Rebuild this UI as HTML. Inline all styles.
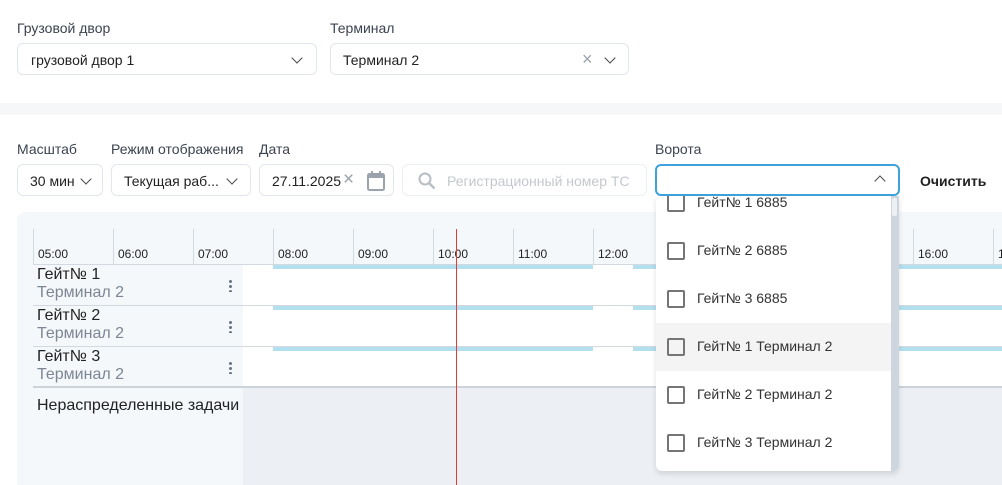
<!DOCTYPE html><html style="width:1002px;height:485px;overflow:hidden"><head><meta charset="utf-8"><style>
*{box-sizing:border-box;margin:0;padding:0}
body{width:1002px;height:485px;overflow:hidden;background:#fff;font-family:"Liberation Sans",Roboto,sans-serif;position:relative;color:#222}
.a{position:absolute}
.lbl{font-size:14px;color:#3c4350}
.box{position:absolute;border:1px solid #e2e7ee;border-radius:6px;background:#fff;font-size:14px;color:#222}
.chev{position:absolute;width:8px;height:8px;border-right:1.5px solid #444;border-bottom:1.5px solid #444;transform:rotate(45deg)}
.hr{position:absolute;top:229px;height:35px;border-left:1px solid #d3d9e0;font-size:12px;padding-left:4px;padding-top:18px;color:#222}
.bar{position:absolute;height:4px;background:#b3e0ee}
.it{position:absolute;left:656px;width:235px;height:48px;font-size:14px;color:#333}
.it i{position:absolute;left:11px;top:15px;width:18px;height:18px;border:2px solid #757575;border-radius:2px}
.it span{position:absolute;left:41px;top:15px}
.g{font-size:16px}
</style></head><body>
<div class="a" style="left:0;top:0;width:1002px;height:103px;background:#fff;box-shadow:0 1px 3px rgba(0,0,0,.12)"></div>
<div class="a" style="left:0;top:103px;width:1002px;height:12px;background:#f6f7f9"></div>
<div class="a lbl" style="left:17px;top:20px">Грузовой двор</div>
<div class="box" style="left:17px;top:43px;width:300px;height:32px"><span class="a" style="left:13px;top:8px">грузовой двор 1</span><div class="chev" style="left:275px;top:10px"></div></div>
<div class="a lbl" style="left:330px;top:20px">Терминал</div>
<div class="box" style="left:330px;top:43px;width:299px;height:32px"><span class="a" style="left:12px;top:8px">Терминал 2</span><span class="a" style="left:251px;top:5px;color:#9aa3ae;font-size:18px">×</span><div class="chev" style="left:275px;top:10px"></div></div>

<div class="a lbl" style="left:17px;top:141px">Масштаб</div>
<div class="box" style="left:17px;top:164px;width:86px;height:32px"><span class="a" style="left:12px;top:8px">30 мин</span><div class="chev" style="left:64px;top:10px"></div></div>
<div class="a lbl" style="left:111px;top:141px">Режим отображения</div>
<div class="box" style="left:111px;top:164px;width:140px;height:32px"><span class="a" style="left:12px;top:8px">Текущая раб...</span><div class="chev" style="left:116px;top:10px"></div></div>
<div class="a lbl" style="left:259px;top:141px">Дата</div>
<div class="box" style="left:259px;top:164px;width:135px;height:32px"><span class="a" style="left:12px;top:8px">27.11.2025</span><span class="a" style="left:83px;top:4px;color:#9aa3ae;font-size:19px">×</span>
<svg class="a" style="left:106px;top:5px" width="20" height="22" viewBox="0 0 20 22"><rect x="2" y="4" width="16" height="16" rx="1.5" fill="none" stroke="#9aa3ae" stroke-width="2"/><rect x="2" y="4" width="16" height="4" fill="#9aa3ae"/><rect x="5" y="1" width="2" height="4" fill="#9aa3ae"/><rect x="13" y="1" width="2" height="4" fill="#9aa3ae"/></svg></div>
<div class="box" style="left:402px;top:164px;width:245px;height:32px;border-color:#eceff3"><svg class="a" style="left:15px;top:7px" width="18" height="18" viewBox="0 0 18 18"><circle cx="7" cy="7" r="5.5" fill="none" stroke="#b8bec6" stroke-width="2"/><path d="M11 11l5.5 5.5" stroke="#b8bec6" stroke-width="2.4"/></svg><span class="a" style="left:44px;top:8px;color:#c3c8ce">Регистрационный номер ТС</span></div>
<div class="a lbl" style="left:655px;top:141px">Ворота</div>
<div class="box" style="left:655px;top:164px;width:245px;height:32px;border:2px solid #3ea2dc"><div class="chev" style="left:219px;top:11px;transform:rotate(-135deg)"></div></div>
<div class="a" style="left:920px;top:173px;font-size:14px;font-weight:bold;color:#222">Очистить</div>

<div class="a" style="left:17px;top:212px;width:1000px;height:273px;background:#f5f8fb;border-radius:8px 8px 0 0"></div>
<div class="a" style="left:243px;top:264px;width:760px;height:124px;background:#fff"></div>
<div class="a" style="left:243px;top:388px;width:760px;height:97px;background:#ecf0f4"></div>
<div class="a" style="left:33px;top:264px;width:970px;height:1px;background:#d3d9e0"></div>
<div class="a" style="left:33px;top:305px;width:970px;height:1px;background:#d3d9e0"></div>
<div class="a" style="left:33px;top:346px;width:970px;height:1px;background:#d3d9e0"></div>
<div class="a" style="left:33px;top:386px;width:970px;height:2px;background:#cdd3da"></div>
<div class="hr" style="left:33px">05:00</div><div class="hr" style="left:113px">06:00</div><div class="hr" style="left:193px">07:00</div><div class="hr" style="left:273px">08:00</div><div class="hr" style="left:353px">09:00</div><div class="hr" style="left:433px">10:00</div><div class="hr" style="left:513px">11:00</div><div class="hr" style="left:593px">12:00</div><div class="hr" style="left:913px">16:00</div><div class="hr" style="left:993px">17:00</div>
<div class="bar" style="left:273px;top:265px;width:320px"></div><div class="bar" style="left:633px;top:265px;width:370px"></div>
<div class="bar" style="left:273px;top:306px;width:320px"></div><div class="bar" style="left:633px;top:306px;width:370px"></div>
<div class="bar" style="left:273px;top:347px;width:320px"></div><div class="bar" style="left:633px;top:347px;width:370px"></div>
<div class="a g" style="left:37px;top:266px">Гейт№ 1</div><div class="a g" style="left:37px;top:284px;color:#7d8694">Терминал 2</div>
<div class="a g" style="left:37px;top:307px">Гейт№ 2</div><div class="a g" style="left:37px;top:325px;color:#7d8694">Терминал 2</div>
<div class="a g" style="left:37px;top:348px">Гейт№ 3</div><div class="a g" style="left:37px;top:366px;color:#7d8694">Терминал 2</div>
<div class="a" style="left:229px;top:279px;width:3px;height:13px;background:radial-gradient(circle,#6b7685 1.4px,transparent 1.6px) 0 0/3px 5px"></div>
<div class="a" style="left:229px;top:320px;width:3px;height:13px;background:radial-gradient(circle,#6b7685 1.4px,transparent 1.6px) 0 0/3px 5px"></div>
<div class="a" style="left:229px;top:361px;width:3px;height:13px;background:radial-gradient(circle,#6b7685 1.4px,transparent 1.6px) 0 0/3px 5px"></div>
<div class="a g" style="left:37px;top:397px">Нераспределенные задачи</div>
<div class="a" style="left:456px;top:229px;width:1px;height:256px;background:#e53935"></div>

<div class="a" style="left:656px;top:196px;width:243px;height:275px;background:#fff;border-radius:0 0 6px 6px;box-shadow:0 3px 6px rgba(0,0,0,.12);overflow:hidden">
<div class="a" style="left:235px;top:0;width:8px;height:275px;background:#cdd5de"></div>
<div class="a" style="left:236px;top:2px;width:5px;height:18px;background:#eef1f4;border-radius:2px"></div>
</div>
<div class="it" style="top:179px;clip-path:inset(17px 0 0 0)"><i></i><span>Гейт№ 1 6885</span></div>
<div class="it" style="top:227px"><i></i><span>Гейт№ 2 6885</span></div>
<div class="it" style="top:275px"><i></i><span>Гейт№ 3 6885</span></div>
<div class="it" style="top:323px;background:#f4f4f4"><i></i><span>Гейт№ 1 Терминал 2</span></div>
<div class="it" style="top:371px"><i></i><span>Гейт№ 2 Терминал 2</span></div>
<div class="it" style="top:419px"><i></i><span>Гейт№ 3 Терминал 2</span></div>
</body></html>
